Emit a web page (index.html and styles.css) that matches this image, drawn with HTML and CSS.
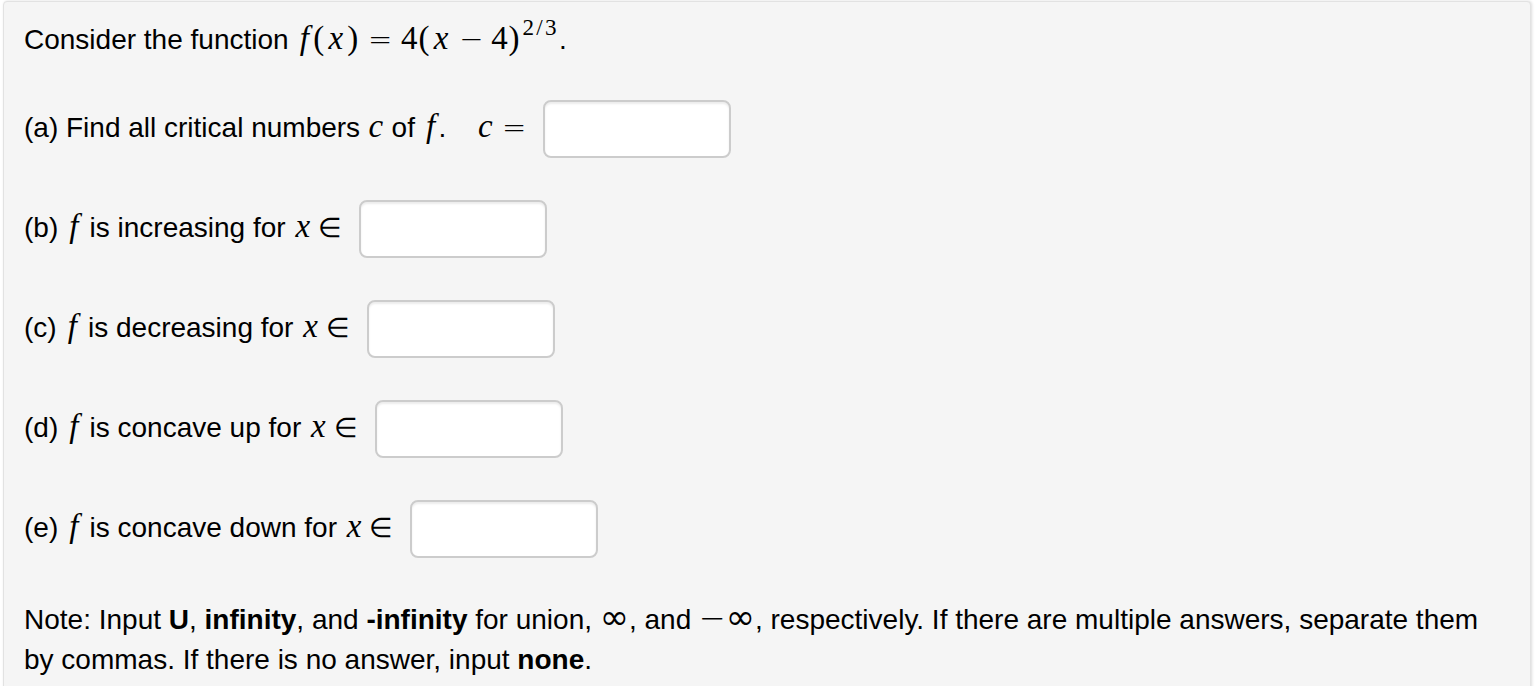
FILE: index.html
```html
<!DOCTYPE html>
<html lang="en">
<head>
<meta charset="utf-8">
<title>Critical numbers</title>
<link rel="stylesheet" href="styles.css">
</head>
<body>
<div class="problem">
  <p class="title">Consider the function <span class="m"><i class="f">f</i><span class="p">(</span><i class="x">x</i><span class="p">)</span><span class="rel op">=</span><span class="n">4</span><span class="p">(</span><i class="x">x</i><span class="bin op">−</span><span class="n">4</span><span class="p">)</span><sup>2/3</sup></span>.</p>
  <div class="rows">
    <div class="row">
      <span class="label">(a) Find all critical numbers <span class="m"><i class="c">c</i></span> of <span class="m"><i class="f">f</i></span>.<span class="m eq"><i class="c">c</i><span class="rel op end">=</span></span></span>
      <input class="ans" type="text" aria-label="critical numbers">
    </div>
    <div class="row">
      <span class="label">(b) <span class="m"><i class="f">f</i></span> is increasing for <span class="m"><i class="x">x</i><span class="rel in end">∈</span></span></span>
      <input class="ans" type="text" aria-label="increasing">
    </div>
    <div class="row">
      <span class="label">(c) <span class="m"><i class="f">f</i></span> is decreasing for <span class="m"><i class="x">x</i><span class="rel in end">∈</span></span></span>
      <input class="ans" type="text" aria-label="decreasing">
    </div>
    <div class="row">
      <span class="label">(d) <span class="m"><i class="f">f</i></span> is concave up for <span class="m"><i class="x">x</i><span class="rel in end">∈</span></span></span>
      <input class="ans" type="text" aria-label="concave up">
    </div>
    <div class="row">
      <span class="label">(e) <span class="m"><i class="f">f</i></span> is concave down for <span class="m"><i class="x">x</i><span class="rel in end">∈</span></span></span>
      <input class="ans" type="text" aria-label="concave down">
    </div>
  </div>
  <p class="note">Note: Input <b>U</b>, <b>infinity</b>, and <b>-infinity</b> for union, <span class="m"><span class="inf">∞</span></span>, and <span class="m"><span class="neg op">−</span><span class="inf">∞</span></span>, respectively. If there are multiple answers, separate them by commas. If there is no answer, input <b>none</b>.</p>
</div>
</body>
</html>
```
FILE: styles.css
```css
* { box-sizing: border-box; }

body {
  margin: 0;
  background: #ffffff;
  font-family: "Liberation Sans", Arial, Helvetica, sans-serif;
  font-size: 28px;
  line-height: 40px;
  color: #000;
}

.problem {
  margin: 1px 0 0 3px;
  width: 1528px;
  min-height: 720px;
  padding: 18px 30px 20px 20px;
  background: #f5f5f5;
  border: 1px solid #e2e2e2;
  border-radius: 4px;
  box-shadow: 1px 0 3px rgba(0, 0, 0, 0.14);
}

.title {
  margin: 0 0 40px;
}

.rows {
  display: flex;
  flex-direction: column;
  gap: 42px;
}

.row {
  display: flex;
  align-items: center;
  height: 58px;
}

.label {
  white-space: nowrap;
  padding-bottom: 2px;
}

/* inline math, in the manner of MathJax TeX output */
.m {
  font-family: "Liberation Serif", "Times New Roman", serif;
  font-size: 33px;
  line-height: 1;
  white-space: nowrap;
}

.m i {
  font-style: italic;
}

.m .f {
  padding: 0 0.1em 0 0.1em;
}

.m .x {
  padding: 0 0.06em;
}

.title .m .x {
  padding: 0 0.1em;
}

.m .c {
  padding: 0 0.02em;
}

.m .p {
  padding: 0 0.03em;
}

.op {
  font-family: "DejaVu Sans", "Liberation Sans", sans-serif;
  font-size: 29px;
  font-weight: 300;
}

.rel {
  margin: 0 0.3em;
}

.rel.end {
  margin-right: 0;
}

.in {
  font-family: "Liberation Serif", serif;
  font-size: 27px;
  margin-left: 0.22em;
}

.bin {
  margin: 0 0.26em;
}

.m sup {
  font-size: 70%;
  line-height: 0;
  letter-spacing: 0.1em;
  vertical-align: 0.62em;
  padding-left: 0.08em;
}

.inf {
  font-family: "DejaVu Sans", sans-serif;
  font-size: 35px;
}

.neg {
  font-size: 32px;
  margin-right: 0;
}

.eq {
  margin-left: 31px;
}

.ans {
  flex: none;
  margin: 0 0 0 17px;
  width: 188px;
  height: 58px;
  padding: 0 10px;
  font: inherit;
  background: #ffffff;
  border: 2px solid #cccccc;
  border-radius: 8px;
  box-shadow: inset 0 2px 2px rgba(0, 0, 0, 0.075);
  outline: none;
}

.note {
  margin: 42px 0 0;
}

.note b {
  font-weight: bold;
}
```
